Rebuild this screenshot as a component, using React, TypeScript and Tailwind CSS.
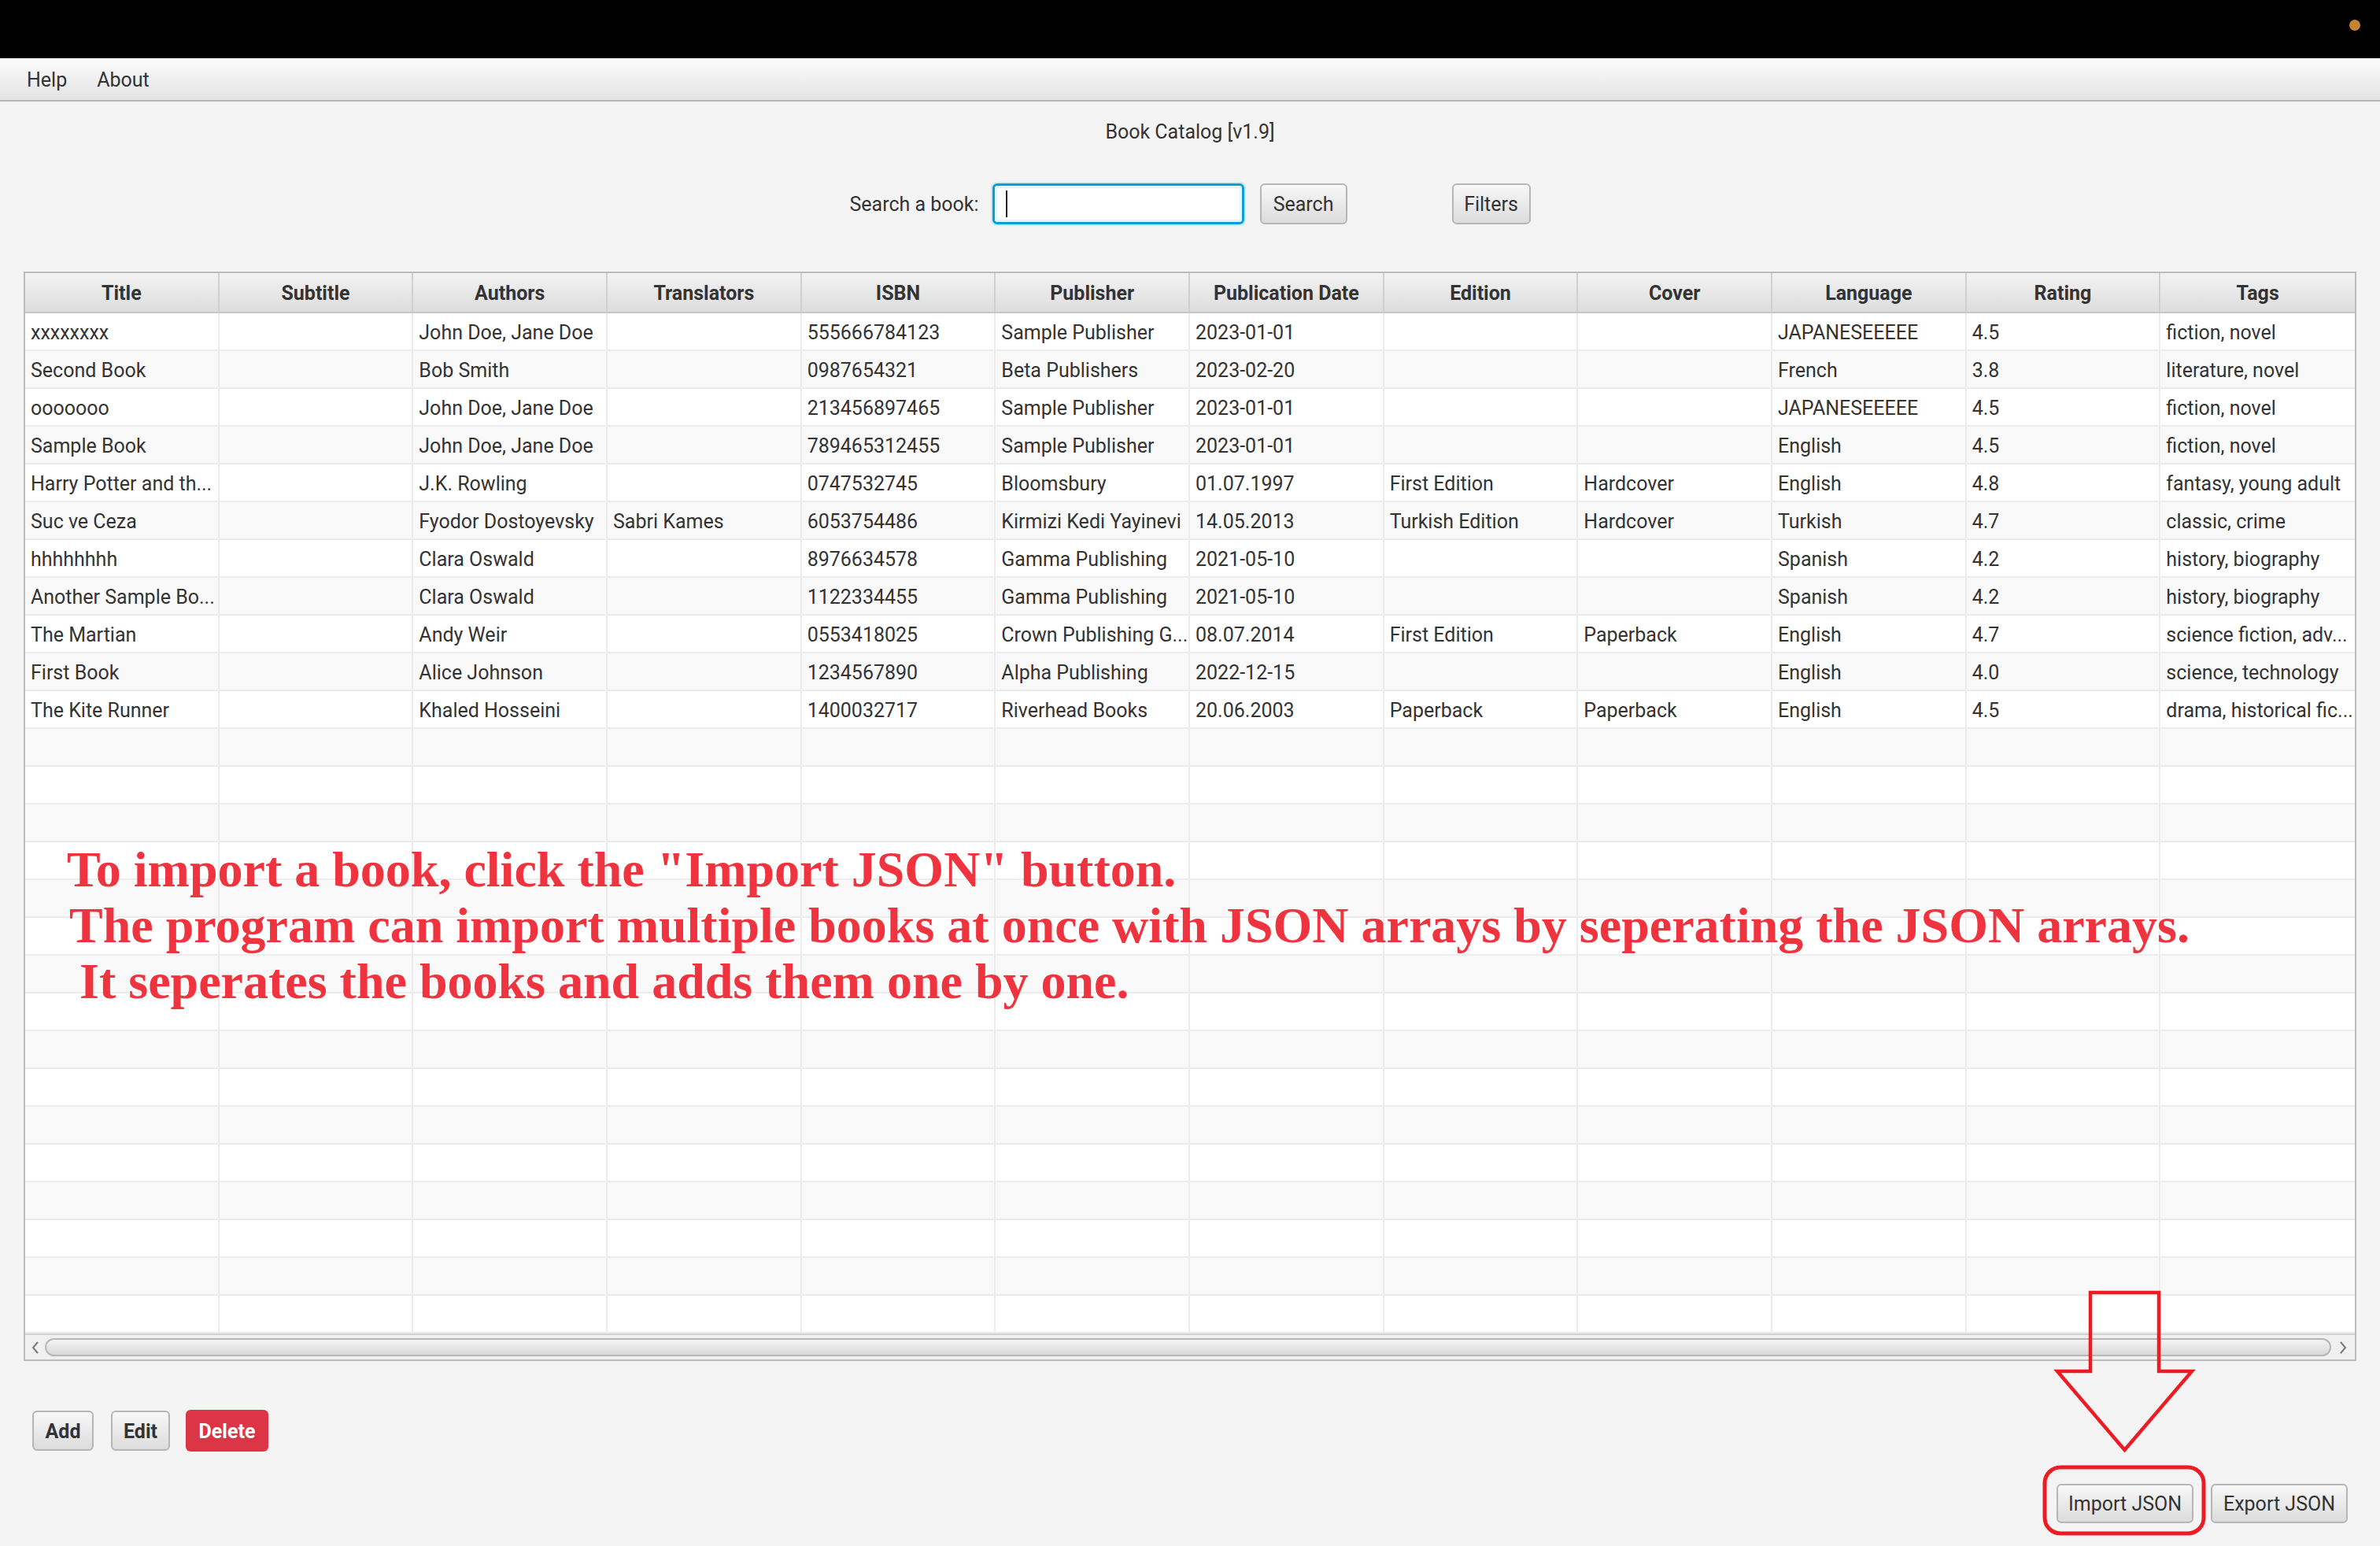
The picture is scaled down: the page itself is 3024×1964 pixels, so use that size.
const columns = [
  "Title",
  "Subtitle",
  "Authors",
  "Translators",
  "ISBN",
  "Publisher",
  "Publication Date",
  "Edition",
  "Cover",
  "Language",
  "Rating",
  "Tags",
];

const books: string[][] = [
  ["xxxxxxxx", "", "John Doe, Jane Doe", "", "555666784123", "Sample Publisher", "2023-01-01", "", "", "JAPANESEEEEE", "4.5", "fiction, novel"],
  ["Second Book", "", "Bob Smith", "", "0987654321", "Beta Publishers", "2023-02-20", "", "", "French", "3.8", "literature, novel"],
  ["ooooooo", "", "John Doe, Jane Doe", "", "213456897465", "Sample Publisher", "2023-01-01", "", "", "JAPANESEEEEE", "4.5", "fiction, novel"],
  ["Sample Book", "", "John Doe, Jane Doe", "", "789465312455", "Sample Publisher", "2023-01-01", "", "", "English", "4.5", "fiction, novel"],
  ["Harry Potter and th...", "", "J.K. Rowling", "", "0747532745", "Bloomsbury", "01.07.1997", "First Edition", "Hardcover", "English", "4.8", "fantasy, young adult"],
  ["Suc ve Ceza", "", "Fyodor Dostoyevsky", "Sabri Kames", "6053754486", "Kirmizi Kedi Yayinevi", "14.05.2013", "Turkish Edition", "Hardcover", "Turkish", "4.7", "classic, crime"],
  ["hhhhhhhh", "", "Clara Oswald", "", "8976634578", "Gamma Publishing", "2021-05-10", "", "", "Spanish", "4.2", "history, biography"],
  ["Another Sample Bo...", "", "Clara Oswald", "", "1122334455", "Gamma Publishing", "2021-05-10", "", "", "Spanish", "4.2", "history, biography"],
  ["The Martian", "", "Andy Weir", "", "0553418025", "Crown Publishing G...", "08.07.2014", "First Edition", "Paperback", "English", "4.7", "science fiction, adv..."],
  ["First Book", "", "Alice Johnson", "", "1234567890", "Alpha Publishing", "2022-12-15", "", "", "English", "4.0", "science, technology"],
  ["The Kite Runner", "", "Khaled Hosseini", "", "1400032717", "Riverhead Books", "20.06.2003", "Paperback", "Paperback", "English", "4.5", "drama, historical fic..."],
];

const TOTAL_ROWS = 27;

const btn =
  "flex items-center justify-center pt-[2px] border-2 border-[#b6b6b6] rounded-[6px] bg-linear-to-b from-[#f8f8f8] to-[#dcdcdc] text-[#333]";

const App = () => {
  const rows = Array.from({ length: TOTAL_ROWS }, (_, i) => books[i] ?? Array(12).fill(""));

  return (
    <div className="relative w-[3024px] h-[1964px] overflow-hidden bg-[#f4f4f4] font-[Roboto,'Liberation_Sans',sans-serif] text-[25px] text-[#333]">
      {/* top bar */}
      <div className="h-[74px] bg-black flex justify-end items-start pt-[25px] pr-[25px]">
        <div className="w-[14px] h-[14px] rounded-full bg-[#c6832f]" />
      </div>

      {/* menu */}
      <div className="h-[55px] flex items-center gap-[38px] pl-[34px] pt-[3px] border-b-2 border-[#b5b5b5] bg-linear-to-b from-[#fcfcfc] to-[#e4e4e4]">
        <span>Help</span>
        <span>About</span>
      </div>

      <div className="h-[74px] flex items-center justify-center pt-[3px]">Book Catalog [v1.9]</div>

      {/* search */}
      <div className="mt-[30px] h-[52px] flex items-center justify-center">
        <span className="mr-[17px] pt-[2px]">Search a book:</span>
        <div className="w-[320px] h-[52px] rounded-[6px] border-[3px] border-[#0b9ed6] bg-white shadow-[0_0_0_2px_#c9e8f4,inset_0_0_0_3px_#e6f3f9] flex items-center">
          <div className="ml-[14px] w-[2px] h-[34px] bg-[#222]" />
        </div>
        <button className={`${btn} ml-[20px] w-[111px] h-[52px]`}>Search</button>
        <button className={`${btn} ml-[133px] w-[100px] h-[52px]`}>Filters</button>
      </div>

      {/* table */}
      <div className="mt-[60px] mx-[30px] border-2 border-[#bcbcbc] bg-white">
        <div className="grid grid-cols-12 h-[51px] border-b-2 border-[#c6c6c6] bg-linear-to-b from-[#f3f3f3] to-[#dddddd]">
          {columns.map((c) => (
            <div
              key={c}
              className="flex items-center justify-center pt-[3px] font-bold border-r-2 border-[#d0d0d0] last:border-r-0"
            >
              {c}
            </div>
          ))}
        </div>
        {rows.map((row, i) => (
          <div
            key={i}
            className={`grid grid-cols-12 h-[48px] border-b-2 border-[#ececec] ${i % 2 === 0 ? "bg-white" : "bg-[#f9f9f9]"}`}
          >
            {row.map((cell, j) => (
              <div
                key={j}
                className="flex items-center pl-[7px] pt-[3px] whitespace-nowrap overflow-hidden border-r-2 border-[#ececec] last:border-r-0"
              >
                {cell}
              </div>
            ))}
          </div>
        ))}
        <div className="h-[33px] flex items-center bg-[#f0f0f0] border-t-2 border-[#d2d2d2]">
          <div className="w-[25px] flex justify-center">
            <svg width="12" height="18" viewBox="0 0 12 18">
              <polyline points="9,2 3,9 9,16" fill="none" stroke="#7a7a7a" strokeWidth="2" />
            </svg>
          </div>
          <div className="flex-1 h-[23px] rounded-full border-2 border-[#b7b7b7] bg-linear-to-b from-[#f3f3f3] to-[#dadada]" />
          <div className="w-[30px] flex justify-center">
            <svg width="12" height="18" viewBox="0 0 12 18">
              <polyline points="3,2 9,9 3,16" fill="none" stroke="#7a7a7a" strokeWidth="2" />
            </svg>
          </div>
        </div>
      </div>

      {/* bottom buttons */}
      <div className="mt-[62px] pl-[41px] flex items-center">
        <button className={`${btn} w-[78px] h-[51px] font-bold`}>Add</button>
        <button className={`${btn} ml-[22px] w-[75px] h-[51px] font-bold`}>Edit</button>
        <button className="ml-[20px] w-[105px] h-[53px] pt-[2px] rounded-[6px] bg-[#dc3545] text-white font-bold">
          Delete
        </button>
      </div>

      <div className="mt-[41px] pr-[41px] flex justify-end gap-[22px]">
        <button className={`${btn} w-[174px] h-[50px]`}>Import JSON</button>
        <button className={`${btn} w-[174px] h-[50px]`}>Export JSON</button>
      </div>

      {/* annotation */}
      <div className="absolute left-[85px] top-[1069px] font-['Liberation_Serif','Times_New_Roman',serif] font-bold text-[64px] leading-[71px] text-[#ef333f] whitespace-pre">
        <div>To import a book, click the "Import JSON" button.</div>
        <div className="ml-[3px]">The program can import multiple books at once with JSON arrays by seperating the JSON arrays.</div>
        <div> It seperates the books and adds them one by one.</div>
      </div>

      <svg
        className="absolute left-[2590px] top-[1630px]"
        width="220"
        height="330"
        viewBox="2590 1630 220 330"
      >
        <polygon
          points="2656,1642 2743,1642 2743,1742 2785,1742 2699.5,1842 2614,1742 2656,1742"
          fill="none"
          stroke="#ed1c24"
          strokeWidth="4.5"
          strokeLinejoin="miter"
        />
        <rect x="2598" y="1864" width="202" height="84" rx="20" fill="none" stroke="#ed1c24" strokeWidth="5" />
      </svg>
    </div>
  );
};

export default App;
